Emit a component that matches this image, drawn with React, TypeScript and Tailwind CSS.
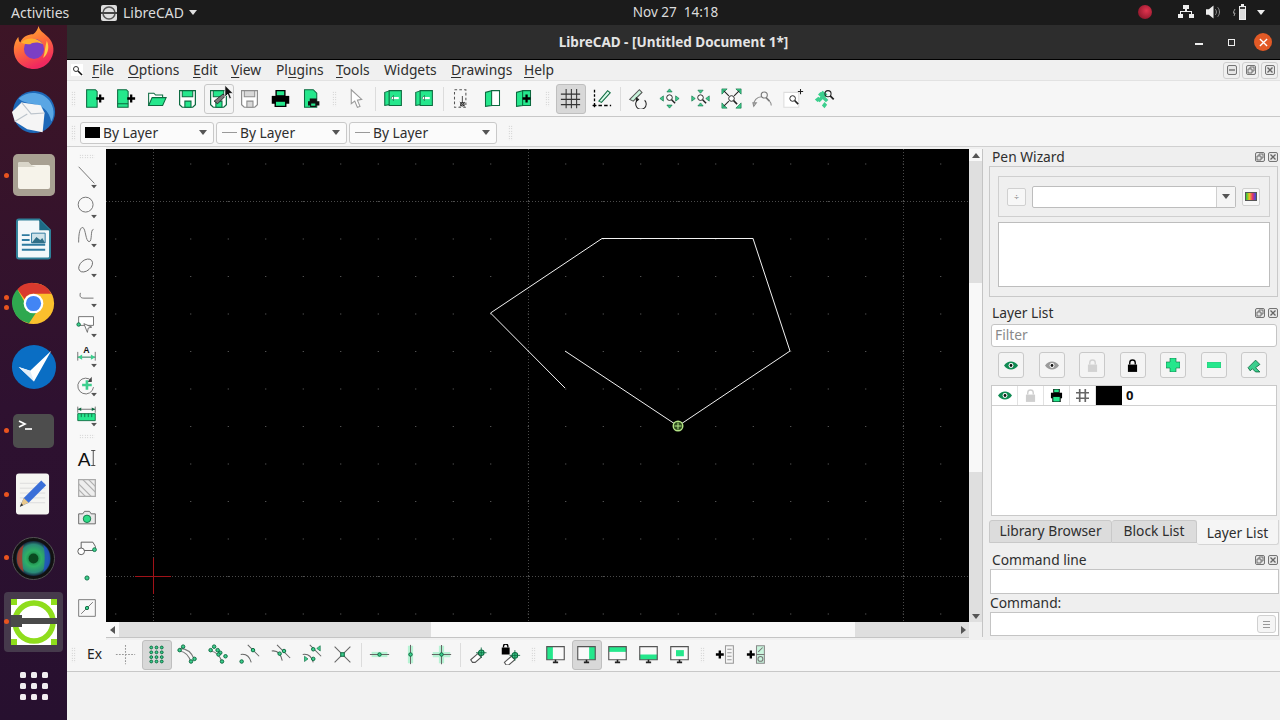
import type { ReactNode } from "react";

const G = "#25e78c";
const D = "#0d6a40";
const K = "#222222";

function Ic({ children, s = 22, w = 1.2 }: { children: ReactNode; s?: number; w?: number }) {
  return (
    <svg viewBox="0 0 24 24" width={s} height={s} fill="none" strokeWidth={w}>
      {children}
    </svg>
  );
}

const N = ({ x, y, r = 2 }: { x: number; y: number; r?: number }) => (
  <circle cx={x} cy={y} r={r} fill="#3ccf8e" stroke={D} strokeWidth="1.1" />
);

const Glass = ({ x = 14, y = 10 }: { x?: number; y?: number }) => (
  <g stroke={K}>
    <circle cx={x} cy={y} r="3.2" fill="#fff" strokeWidth="1.1" />
    <path d={`M${x + 2.4} ${y + 2.4}l4 4`} strokeWidth="1.8" />
  </g>
);

const Doc = ({ plus, strip }: { plus?: boolean; strip?: boolean }) => (
  <>
    <path d="M3 2h10l2 2v18H3z" fill={G} stroke={D} />
    {strip && <path d="M3 18h12" stroke={D} />}
    {plus && <path d="M14 12h9M18.5 7.5v9" stroke="#000" strokeWidth="2.6" />}
  </>
);

const Floppy = ({ c = G, o = D, pen }: { c?: string; o?: string; pen?: boolean }) => (
  <>
    <path d="M3 3h18v16l-3 3H6l-3-3z" fill="#fff" stroke={o} strokeWidth="1.4" />
    <path d="M6 3h12v7H6z" fill={c} stroke={o} />
    <path d="M9 15h7v7H9z" fill={c} stroke={o} />
    {pen && <path d="M7 15l10-8 3 2-9 9z" fill="#7a7a7a" stroke={K} strokeWidth="1" />}
  </>
);

const Monitor = ({ area }: { area: string }) => (
  <>
    <path d="M2 3h20v15H2z" fill="#fafafa" />
    <path d={area} fill={G} />
    <path d="M2 3h20v15H2z" stroke="#555" strokeWidth="1.3" />
    <path d="M9 21h6M12 18v3" stroke={K} strokeWidth="1.8" />
  </>
);

const Book = ({ plus }: { plus?: boolean }) => (
  <>
    <path d="M4 5l7-2v17l-7 1z" fill={G} stroke={D} />
    <path d="M11 3h9v17h-9z" fill={plus ? G : "#fff"} stroke={D} />
    {plus && <path d="M11 12h9M15.5 7.5v9" stroke="#000" strokeWidth="2.6" />}
  </>
);

const Swap = () => (
  <>
    <path d="M2 5l6-2v16l-6 1z" fill={G} stroke={D} />
    <path d="M7 3h14v17H7z" fill={G} stroke={D} />
    <path d="M9 11.5h9" stroke="#fff" strokeWidth="2.5" />
    <path d="M9 11.5l3-3v6z" fill="#fff" stroke={D} strokeWidth="0.8" />
  </>
);

const Tri = ({ d }: { d: string }) => <path d={d} fill="#3ccf8e" stroke={D} strokeWidth="0.7" />;

const top1: ReactNode[] = [
  <Doc plus />,
  <Doc plus strip />,
  <>
    <path d="M3 6h6l2 2h8v3H8l-3 9H3z" fill="#fff" stroke={D} />
    <path d="M7 11h16l-4 9H3z" fill={G} stroke={D} />
  </>,
  <Floppy />,
  <Floppy pen />,
  <Floppy c="#d8d8d8" o="#8d8d8d" />,
  <>
    <path d="M7 3h10v6H7z" fill={G} stroke="#000" strokeWidth="1.6" />
    <path d="M2 9h20v9H2z" fill="#000" />
    <path d="M6 15h12v6H6z" fill={G} stroke="#000" strokeWidth="1.6" />
  </>,
  <>
    <path d="M4 2h10l4 4v16H4z" fill={G} stroke={D} />
    <path d="M10 12h8v3h3v5H8v-5h2z" fill="#111" />
    <path d="M11 17h6v4h-6z" fill={G} stroke="#111" />
  </>,
];

const top2: ReactNode[] = [
  <>
    <path d="M4 2h13v20H4z" stroke="#555" strokeDasharray="3 2.5" />
    <path d="M13 9v7" stroke="#555" />
    <circle cx="13" cy="18.5" r="2" stroke={K} />
    <path d="M10 21l6-5M16 21l-6-5" stroke={K} strokeWidth="0.9" />
  </>,
  <Book />,
  <Book plus />,
];

const zoomPad = (arrows: ReactNode) => (
  <>
    {arrows}
    <Glass x={12} y={11} />
  </>
);

const top3: ReactNode[] = [
  <>
    <path d="M4 2v18" stroke="#000" strokeWidth="1.5" strokeDasharray="3 2" />
    <path d="M2 20h21" stroke="#000" strokeWidth="1.5" strokeDasharray="4 2.5" />
    <path d="M9 15L19 3l3 2.5-10 11z" fill="#d9f9e8" stroke={D} />
    <path d="M2 20h4M4 18v4" stroke="#000" strokeWidth="1.4" />
  </>,
];

const top4: ReactNode[] = [
  <>
    <path d="M2 13L13 2l3 3L6 15z" fill="#c9f5dd" stroke="#555" />
    <path d="M19 14a6 6 0 1 1-7-1" stroke={K} />
    <path d="M9 10l4 3-4 3z" fill={K} />
  </>,
  zoomPad(
    <>
      <Tri d="M12 1l3 3.5H9z" />
      <Tri d="M12 23l3-3.5H9z" />
      <Tri d="M1 12l4-3v6z" />
      <Tri d="M23 12l-4-3v6z" />
    </>
  ),
  zoomPad(
    <>
      <Tri d="M12 6l3-3.5H9z" />
      <Tri d="M12 17l3 3.5H9z" />
      <Tri d="M6 12L2 9v6z" />
      <Tri d="M18 12l4-3v6z" />
    </>
  ),
  <>
    <Tri d="M1 1h6l-6 6z" />
    <Tri d="M23 1h-6l6 6z" />
    <Tri d="M1 23h6l-6-6z" />
    <Tri d="M23 23h-6l6-6z" />
    <path d="M3 3l6 6M21 3l-6 6M3 21l6-6" stroke={K} />
    <Glass x={12} y={12} />
  </>,
  <>
    <path d="M2 20a9 9 0 0 1 9-10" stroke="#8d8d8d" />
    <path d="M2 21l-1-4h4zM22 20c0-2-1-4-2-5" stroke="#8d8d8d" />
    <circle cx="14" cy="8" r="3.5" stroke="#777" />
    <path d="M16 11l4 4" stroke="#777" strokeWidth="1.8" />
  </>,
  <>
    <path d="M1 5h17v17H1z" fill="#fff" stroke="#ddd" />
    <Glass x={11} y={12} />
    <path d="M20 1v6M17 4h6" stroke={K} />
  </>,
  <>
    <path d="M6 6l9 9M14 6l-9 9" stroke="#3ccf8e" strokeWidth="4" />
    <path d="M1 13l4-3 3 3-4 3zM9 20l3-4 3 3-3 4zM7 6l3-3 3 3-3 3z" fill="#3ccf8e" />
    <g stroke={K}>
      <circle cx="16" cy="6.5" r="3.5" strokeWidth="1.2" />
      <path d="M18.5 9l4 4" strokeWidth="2" />
    </g>
  </>,
];

const side1: ReactNode[] = [
  <path d="M3 2l18 19" stroke="#666" />,
  <circle cx="11" cy="11" r="8.5" stroke="#666" />,
  <path d="M3 20C3 8 5 2 8 3s3 16 7 16 1-14 5-14" stroke="#666" />,
  <ellipse cx="11" cy="12" rx="9" ry="6" transform="rotate(-40 11 12)" stroke="#666" />,
  <path d="M20 15H9c-4 0-5-2-4-6" stroke="#666" />,
  <>
    <path d="M3 3h17v10H3z" fill="#fff" stroke="#666" />
    <path d="M9 11l9 4-4 1-1 5z" fill="#fff" stroke="#666" />
    <circle cx="3" cy="12" r="2" fill="#3ccf8e" stroke={D} />
  </>,
  <>
    <text x="12" y="10" textAnchor="middle" fontSize="10" fontWeight="700" fill="#111" fontFamily="Liberation Sans, sans-serif">A</text>
    <path d="M2 9v10M22 9v10" stroke="#666" />
    <path d="M2 15h20" stroke={D} />
    <path d="M2 15l5-3v6zM22 15l-5-3v6z" fill="#3ccf8e" />
  </>,
  <>
    <path d="M18 8a9 9 0 1 0 2 7" stroke="#666" />
    <path d="M18 3v6h-5z" fill="#444" />
    <path d="M11 7h3v4h4v3h-4v4h-3v-4H7v-3h4z" fill="#3ccf8e" />
  </>,
  <>
    <path d="M2 3v7M22 3v7M2 6h20" stroke="#666" />
    <path d="M2 6l4-2v4zM22 6l-4-2v4z" fill={D} />
    <path d="M2 11h20v8H2z" fill={G} stroke={D} />
    <path d="M6 11v4M10 11v4M14 11v4M18 11v4" stroke={D} />
  </>,
];

const side2: ReactNode[] = [
  <>
    <text x="1" y="21" fontSize="23" fill="#111" fontFamily="Liberation Sans, sans-serif">A</text>
    <path d="M17 3h5M17 21h5M19.5 3v18" stroke="#333" />
  </>,
  <>
    <path d="M2 2h20v20H2z" fill="#eee" stroke="#aaa" strokeWidth="1.5" />
    <path d="M2 7l15 15M2 14l8 8M7 2l15 15M14 2l8 8" stroke="#b0b0b0" strokeWidth="1.5" />
  </>,
  <>
    <path d="M2 7h5l2-3h6l2 3h5v12H2z" fill="#e8e8e8" stroke="#555" />
    <circle cx="12" cy="13" r="4.5" fill="#2ddb85" stroke={D} />
  </>,
  <>
    <path d="M5 5h14l3 5v5H5z" stroke="#444" />
    <circle cx="5" cy="16" r="4" fill="#fff" stroke="#444" />
    <circle cx="21" cy="14" r="2.3" fill="#3ccf8e" stroke={D} />
  </>,
  <N x={12} y={12} r={2.5} />,
  <>
    <path d="M2 2h20v20H2z" stroke="#666" />
    <path d="M5 19L19 5" stroke="#666" />
    <N x={12} y={12} />
  </>,
];

const arc = "M3 8c7 1 11 6 13 13";
const arc2 = "M3 5c8 0 14 5 17 13";

const snap1: ReactNode[] = [
  <path d="M1 12h22M12 1v22" stroke="#999" strokeWidth="1.2" strokeDasharray="2 1.5" />,
  <>
    {[4, 9.5, 15, 20].map((y) =>
      [6, 12, 18].map((x) => <N key={`${x}-${y}`} x={x} y={y} r={1.6} />)
    )}
  </>,
  <>
    <path d={arc} stroke="#777" />
    <path d={arc2} stroke="#777" />
    <N x={3} y={7} /><N x={7} y={3} /><N x={16} y={20} /><N x={20} y={17} />
  </>,
  <>
    <path d={arc} stroke="#777" />
    <N x={3} y={7} /><N x={7} y={3} /><N x={11} y={7} /><N x={14} y={10} /><N x={16} y={20} /><N x={20} y={14} /><N x={12} y={12} />
  </>,
  <>
    <path d="M2 12c6-1 10 2 12 9M10 1l13 13" stroke="#666" />
    <N x={3} y={20} /><N x={16} y={7} />
  </>,
  <>
    <path d="M2 8c6-1 10 2 12 11M8 1l15 15" stroke="#666" />
    <N x={11} y={11} /><N x={16} y={8} />
  </>,
  <>
    <path d="M2 12c6-1 10 2 12 9M10 1l13 13" stroke="#666" />
    <N x={14} y={6} /><N x={14} y={17} />
    <Tri d="M22 2v6l-4-3zM4 14v6l4-3z" />
  </>,
  <>
    <path d="M3 3l18 18M21 3L3 21" stroke="#666" />
    <path d="M10 10h4v4h-4z" fill="#3ccf8e" stroke={D} />
  </>,
];

const snap2: ReactNode[] = [
  <>
    <path d="M3 9h18v6H3z" fill="#b7f3d4" />
    <path d="M1 12h22" stroke="#666" />
    <N x={12} y={12} />
  </>,
  <>
    <path d="M9 2h6v20H9z" fill="#b7f3d4" />
    <path d="M12 1v22" stroke="#666" />
    <N x={12} y={12} />
  </>,
  <>
    <path d="M9 2h6v7h7v6h-7v7H9v-7H2V9h7z" fill="#b7f3d4" />
    <path d="M12 1v22M1 12h22" stroke="#666" />
    <N x={12} y={12} />
  </>,
];

const Eraser = () => <path d="M2 18l8-7 4 4-7 6H4z" fill="#fff" stroke="#555" />;
const Target = () => (
  <>
    <circle cx="14" cy="10" r="3.2" fill="#3ccf8e" stroke={D} />
    <path d="M14 4v12M8 10h12" stroke={D} strokeWidth="1" />
  </>
);

const snap3: ReactNode[] = [
  <><Eraser /><Target /></>,
  <>
    <path d="M2 4h9v8H2z" fill="#000" />
    <path d="M4 4V2.5a2.5 2.5 0 0 1 5 0V4" stroke="#000" strokeWidth="1.5" />
    <g transform="translate(3 3)"><Eraser /><Target /></g>
  </>,
];

const views: ReactNode[] = [
  <Monitor area="M2 3h7v15H2z" />,
  <Monitor area="M15 3h7v15h-7z" />,
  <Monitor area="M2 3h20v6H2z" />,
  <Monitor area="M2 12h20v6H2z" />,
  <Monitor area="M8 7h9v7H8z" />,
];

const adds: ReactNode[] = [
  <>
    <path d="M1 12h9M5.5 7.5v9" stroke="#000" strokeWidth="2.7" />
    <path d="M12 2h9v20h-9z" fill="#f7f7f7" stroke="#999" />
    <path d="M14 6h5M14 10h5M14 14h5M14 18h5" stroke="#999" />
  </>,
  <>
    <path d="M1 12h9M5.5 7.5v9" stroke="#000" strokeWidth="2.7" />
    <path d="M12 2h9v20h-9z" fill="#c9f5dd" stroke="#888" />
    <path d="M12 12h9M14 9l5-5" stroke="#777" />
    <circle cx="16.5" cy="17" r="2.8" stroke="#777" />
  </>,
];

function Slots({ items, active, hover }: { items: ReactNode[]; active?: number; hover?: number }) {
  return (
    <>
      {items.map((item, i) => (
        <div key={i} className="w-[31px] h-[31px] flex items-center justify-center">
          <div
            className={`w-[30px] h-[30px] flex items-center justify-center rounded-[3px] border ${
              i === active
                ? "bg-[#d8d8d8] border-[#bfbfbf]"
                : i === hover
                ? "bg-[#f5f5f5] border-[#c8c8c8]"
                : "border-transparent"
            }`}
          >
            <Ic s={21}>{item}</Ic>
          </div>
        </div>
      ))}
    </>
  );
}

const Handle = ({ w }: { w: string }) => (
  <div className={`${w} h-full flex items-center justify-center`}>
    <div className="w-[5px] h-[16px] bg-[radial-gradient(#bdbdbd_0.7px,transparent_0.8px)] bg-[length:2.5px_2.5px]" />
  </div>
);

const Sep = ({ w }: { w: string }) => (
  <div className={`${w} h-full flex items-center justify-center`}>
    <div className="w-px h-[24px] bg-[#dcdcdc]" />
  </div>
);

function Caret({ c = "#555" }: { c?: string }) {
  return (
    <svg width="8" height="5" viewBox="0 0 8 5">
      <path d="M0 0h8L4 5z" fill={c} />
    </svg>
  );
}

function Combo({ w, pl, swatch, dash }: { w: string; pl: string; swatch?: boolean; dash?: boolean }) {
  return (
    <div className={`${w} h-[22px] flex items-center border border-[#c9c9c9] rounded-[3px] bg-[#fbfbfb] ${pl} pr-[6px]`}>
      {swatch && <div className="w-[15px] h-[11px] bg-black mr-[3px]" />}
      {dash && <div className="w-[15px] h-px bg-[#999] mr-[3px]" />}
      <span className="flex-1 text-[13.8px] text-[#2e2e2e] leading-none">By Layer</span>
      <Caret />
    </div>
  );
}

function MiniBtn({ kind, big }: { kind: "min" | "float" | "close"; big?: boolean }) {
  const s = big ? "w-[17px] h-[17px]" : "w-[10px] h-[10px]";
  return (
    <div className={`${s} flex items-center justify-center ${big ? "border border-[#cfcfcf] rounded-[3px]" : ""}`}>
      <svg viewBox="0 0 10 10" width="10" height="10" fill="none" stroke="#666" strokeWidth="0.9">
        <rect x="0.5" y="0.5" width="9" height="9" rx="1.5" fill="#e6e6e6" />
        {kind === "min" && <path d="M2 5h6" strokeWidth="1.3" />}
        {kind === "float" && <path d="M2 4h4v4H2zM4 4V2h4v4H6" />}
        {kind === "close" && <path d="M2.5 2.5l5 5M7.5 2.5l-5 5" strokeWidth="1.3" />}
      </svg>
    </div>
  );
}

function DockTitle({ title, h, pl = "pl-[7px]" }: { title: string; h: string; pl?: string }) {
  return (
    <div className={`${h} flex items-center justify-between ${pl} pr-[2px] text-[13.8px] text-[#2e2e2e]`}>
      <span>{title}</span>
      <div className="flex gap-[3px]">
        <MiniBtn kind="float" />
        <MiniBtn kind="close" />
      </div>
    </div>
  );
}

const Split = ({ h }: { h: string }) => (
  <div className={`${h} flex items-center justify-center`}>
    <div className="w-[16px] h-[2px] bg-[radial-gradient(#b5b5b5_0.6px,transparent_0.7px)] bg-[length:3px_2px]" />
  </div>
);

function Menu({ pre = "", u, rest }: { pre?: string; u: string; rest: string }) {
  return (
    <span>
      {pre}
      <span className="underline underline-offset-2">{u}</span>
      {rest}
    </span>
  );
}

const Eye = ({ c = "#0f8a52" }: { c?: string }) => (
  <svg viewBox="0 0 16 10" width="14" height="9">
    <path d="M0 5c4-6 12-6 16 0-4 6-12 6-16 0z" fill={c} />
    <circle cx="8" cy="5" r="2.8" fill="#fff" />
    <circle cx="8" cy="5" r="1.6" fill="#111" />
  </svg>
);

const Lock = ({ c }: { c: string }) => (
  <svg viewBox="0 0 12 14" width="11" height="13">
    <path d="M1 6h10v8H1z" fill={c} />
    <path d="M3 6V4a3 3 0 0 1 6 0v2" fill="none" stroke={c} strokeWidth="1.5" />
  </svg>
);

const layerBtns: ReactNode[] = [
  <Eye />,
  <Eye c="#9a9a9a" />,
  <Lock c="#d2d2d2" />,
  <Lock c="#000" />,
  <svg viewBox="0 0 14 14" width="14" height="14"><path d="M4 0h6v4h4v6h-4v4H4v-4H0V4h4z" fill={G} stroke={D} strokeWidth="0.6" /></svg>,
  <svg viewBox="0 0 14 6" width="14" height="6"><path d="M0 0h14v6H0z" fill={G} stroke="#2eb877" strokeWidth="0.6" /></svg>,
  <svg viewBox="0 0 14 14" width="15" height="15"><path d="M1 9l7-7 4 4-4 3 4 4H8L5 10 3 12z" fill="#3ccf8e" stroke={D} strokeWidth="0.8" /></svg>,
];

function LayerCell({ children, w = "w-[26px]" }: { children?: ReactNode; w?: string }) {
  return <div className={`${w} h-full flex items-center justify-center border-r border-[#e2e2e2]`}>{children}</div>;
}

function Canvas() {
  const xs = Array.from({ length: 23 }, (_, i) => 9.25 + 37.5 * i);
  const ys = Array.from({ length: 13 }, (_, i) => 14.5 + 37.5 * i);
  const o = (x: number, y: number) => `${x - 106},${y - 149}`;
  return (
    <svg width="863" height="473" className="block bg-black">
      {xs.map((x) =>
        ys.map((y) => <rect key={`${x}-${y}`} x={x} y={y} width="1" height="1" fill="#6a6a6a" />)
      )}
      {[47, 422, 797].map((x) => (
        <path key={x} d={`M${x}.5 0V473`} stroke="#4a4a4a" strokeDasharray="1 2" />
      ))}
      {[52, 427].map((y) => (
        <path key={y} d={`M0 ${y}.5H863`} stroke="#4a4a4a" strokeDasharray="1 2" />
      ))}
      <path d="M29 427.5h36M47.5 409v36" stroke="#a01218" />
      <polyline
        points={[[565, 388], [490.5, 313], [602, 238.5], [753, 238.5], [790, 351], [678, 426], [565, 351]]
          .map(([x, y]) => o(x, y))
          .join(" ")}
        fill="none"
        stroke="#f2f2f2"
      />
      <g transform="translate(572 277)" stroke="#b4e486" fill="none">
        <circle r="4.8" fill="#2c4a1c" strokeWidth="1.4" />
        <path d="M-3.5 0h7M0-3.5v7" strokeWidth="1" />
      </g>
    </svg>
  );
}

function Firefox() {
  return (
    <svg viewBox="0 0 48 48" width="44" height="44">
      <defs>
        <linearGradient id="ff" x1="0" y1="0" x2="0.4" y2="1">
          <stop offset="0" stopColor="#ffc230" />
          <stop offset="0.5" stopColor="#ff7139" />
          <stop offset="1" stopColor="#f0285f" />
        </linearGradient>
      </defs>
      <path d="M29 0c1 5 5 7 9 11 6 5 8 12 7 18-2 11-11 18-21 18C12 47 2 38 2 26 2 19 5 14 7 12c0 3 1 5 2 6 3-7 9-9 14-9 3-2 5-5 6-9z" fill="url(#ff)" />
      <circle cx="24" cy="25" r="11" fill="#7b3fc4" />
      <path d="M10 18c6-6 18-6 24 2-6-3-12-2-14 0-3 0-7 0-10-2z" fill="#ffb02e" />
      <path d="M38 16c3 6 2 14-4 19 2-6 2-13 4-19z" fill="#ffcc44" />
    </svg>
  );
}

function Thunderbird() {
  return (
    <svg viewBox="0 0 48 48" width="46" height="46">
      <circle cx="24" cy="24" r="22" fill="#1d68b8" />
      <path d="M8 10c8-8 24-8 32 2 5 7 6 16 2 22-2-12-10-18-22-19-6-1-9-2-12-5z" fill="#5aa6e4" />
      <path d="M1 24l10-10 20 3 4 8-2 20-16-3L4 34z" fill="#f5f5f5" />
      <path d="M11 14l10 12 14-1M4 34l13-8" stroke="#bcc4cc" strokeWidth="1.2" fill="none" />
    </svg>
  );
}

function Files() {
  return (
    <div className="w-[42px] h-[42px] rounded-[5px] bg-[#a8a092] flex items-center justify-center">
      <svg viewBox="0 0 32 28" width="32" height="28">
        <path d="M0 3a2 2 0 0 1 2-2h8l3 3h17a2 2 0 0 1 2 2v20a2 2 0 0 1-2 2H2a2 2 0 0 1-2-2z" fill="#f6f3ea" />
        <path d="M0 3a2 2 0 0 1 2-2h8l3 3 5 2H0z" fill="#d9d5c9" />
      </svg>
    </div>
  );
}

function Writer() {
  return (
    <svg viewBox="0 0 36 42" width="35" height="42">
      <path d="M1 3a2 2 0 0 1 2-2h21l11 11v27a2 2 0 0 1-2 2H3a2 2 0 0 1-2-2z" fill="#f2f8fa" stroke="#2e8099" strokeWidth="2" />
      <path d="M24 1l11 11H24z" fill="#1d6a85" />
      <path d="M6 16h8v2H6zM6 21h8v2H6zM6 26h24v2H6zM6 31h24v2H6z" fill="#2e7ba0" />
      <path d="M16 15h14v10H16z" fill="#cfe3ea" stroke="#2e7ba0" />
      <path d="M16 25l5-6 4 3 2-2 3 5z" fill="#2f6f87" />
    </svg>
  );
}

function Chrome() {
  return (
    <svg viewBox="0 0 48 48" width="43" height="43">
      <circle cx="24" cy="24" r="23" fill="#fbc02d" />
      <path d="M24 1a23 23 0 0 1 20 12H24a11 11 0 0 0-10 6L6 8A23 23 0 0 1 24 1z" fill="#d93a2e" />
      <path d="M6 8l10 18a11 11 0 0 0 11 8L19 46A23 23 0 0 1 6 8z" fill="#2fa84f" />
      <circle cx="24" cy="24" r="11" fill="#fff" />
      <circle cx="24" cy="24" r="8.5" fill="#4285f4" />
    </svg>
  );
}

function Tasks() {
  return (
    <svg viewBox="0 0 48 48" width="46" height="46">
      <circle cx="24" cy="24" r="23" fill="#0a6ec4" />
      <path d="M8 24l12 4 22-21-18 32z" fill="#fff" />
      <path d="M8 24l12 4 4 11z" fill="#e3eef8" />
    </svg>
  );
}

function Terminal() {
  return (
    <div className="w-[41px] h-[34px] rounded-[5px] bg-[#4d4d4d] relative">
      <svg viewBox="0 0 41 34" width="41" height="34">
        <path d="M6 7l6 3-6 3" stroke="#fff" strokeWidth="1.7" fill="none" />
        <path d="M12 15h7" stroke="#ddd" strokeWidth="2" />
      </svg>
    </div>
  );
}

function TextEd() {
  return (
    <svg viewBox="0 0 36 42" width="35" height="42">
      <rect width="34" height="42" rx="3" fill="#f5f5f2" />
      <path d="M4 10h26M4 15h26M4 20h26M4 25h26M4 30h26" stroke="#dcdcdc" />
      <path d="M4 34l4-9L26 7l5 5-18 18z" fill="#3a6fd8" />
      <path d="M4 34l4-9 5 5z" fill="#e8c88c" />
      <path d="M4 34l1.5-3.5 2 2z" fill="#333" />
    </svg>
  );
}

function Camera() {
  return (
    <svg viewBox="0 0 44 44" width="43" height="43">
      <defs>
        <radialGradient id="lens">
          <stop offset="0" stopColor="#0f6a34" />
          <stop offset="0.45" stopColor="#2fb066" />
          <stop offset="0.8" stopColor="#2a8a78" />
          <stop offset="1" stopColor="#14203a" />
        </radialGradient>
      </defs>
      <circle cx="22" cy="22" r="21.5" fill="#111" stroke="#555" />
      <circle cx="22" cy="22" r="18" fill="url(#lens)" />
      <path d="M5 22a17 17 0 0 1 7-14c-2 8-2 18 0 28a17 17 0 0 1-7-14z" fill="#a83a2a" opacity="0.85" />
      <path d="M39 22a17 17 0 0 0-7-14c2 8 2 18 0 28a17 17 0 0 0 7-14z" fill="#2050c0" opacity="0.85" />
      <circle cx="22" cy="22" r="5" fill="#0a4a20" />
    </svg>
  );
}

function LibreCad() {
  return (
    <svg viewBox="0 0 46 46" width="46" height="46">
      <rect width="46" height="46" fill="#fff" />
      <path d="M0 0h6v6H0zM40 0h6v6h-6zM0 40h6v6H0zM40 40h6v6h-6z" fill="#8fdd1c" />
      <circle cx="23" cy="23" r="19" fill="none" stroke="#8fdd1c" strokeWidth="5.5" />
      <path d="M0 19h11v-3H0zM0 19h46v6H11v3H0z" fill="#4a4a4a" />
    </svg>
  );
}

function AppGrid() {
  return (
    <div className="grid grid-cols-3 gap-x-[5px] gap-y-[5px]">
      {Array.from({ length: 9 }, (_, i) => (
        <div key={i} className="w-[6px] h-[6px] rounded-[1.5px] bg-[#f1eef0]" />
      ))}
    </div>
  );
}

const dock: { el: ReactNode; dots?: number; active?: boolean }[] = [
  { el: <Firefox /> },
  { el: <Thunderbird /> },
  { el: <Files />, dots: 1 },
  { el: <Writer /> },
  { el: <Chrome />, dots: 2 },
  { el: <Tasks /> },
  { el: <Terminal />, dots: 1 },
  { el: <TextEd />, dots: 1 },
  { el: <Camera />, dots: 1 },
  { el: <LibreCad />, dots: 1, active: true },
  { el: <AppGrid /> },
];

export default function App() {
  return (
    <div className="relative w-[1280px] h-[720px] overflow-hidden flex flex-col bg-[#f0f0f0] font-['Noto_Sans',sans-serif] text-[#2e2e2e]">
      {/* gnome top bar */}
      <div className="h-[25px] shrink-0 bg-[#1b1b1b] relative flex items-center text-[14px] text-[#dcdcdc]">
        <span className="ml-[11px] w-[90px]">Activities</span>
        <svg viewBox="0 0 16 16" width="16" height="16" className="mr-[6px]">
          <rect width="16" height="16" rx="2" fill="#ddd" />
          <circle cx="8" cy="8" r="6" fill="none" stroke="#555" strokeWidth="1.5" />
          <path d="M0 7h16v2H0z" fill="#444" />
        </svg>
        <span>LibreCAD</span>
        <span className="ml-[5px]"><Caret c="#e0e0e0" /></span>
        <div className="flex-1 flex justify-center pl-[68px] pr-[194px] text-[13.5px]">
          <span>Nov 27&nbsp;&nbsp;14:18</span>
        </div>
        <div className="absolute left-[1138px] top-[5px] w-[14px] h-[14px] rounded-full bg-[radial-gradient(circle_at_60%_40%,#e0344e,#7a0f22)]" />
        <svg className="absolute left-[1178px] top-[5px]" viewBox="0 0 16 14" width="16" height="14" fill="#eee">
          <path d="M5 0h6v4H9v2h5v3h2v4h-5V9h2V7H3v2h2v4H0V9h2V6h5V4H5z" />
        </svg>
        <svg className="absolute left-[1206px] top-[5px]" viewBox="0 0 16 14" width="15" height="14" fill="none">
          <path d="M0 4h3l5-4v14l-5-4H0z" fill="#eee" />
          <path d="M10 4c1.5 2 1.5 4 0 6M12.5 2c2.5 3 2.5 7 0 10" stroke="#999" />
        </svg>
        <svg className="absolute left-[1233px] top-[4px]" viewBox="0 0 16 16" width="16" height="16" fill="none">
          <path d="M2 5l-2 4h2l-1 3" stroke="#bbb" strokeWidth="0.8" />
          <path d="M6 2h2V0h3v2h2v14H6z" fill="#eee" />
          <path d="M7 3h5v12H7z" fill="#3a3a3a" />
          <path d="M7 5h5v10H7z" fill="#dcdcdc" />
        </svg>
        <span className="absolute left-[1257px] top-[10px]"><Caret c="#eee" /></span>
      </div>

      <div className="flex-1 flex min-h-0">
        {/* ubuntu dock */}
        <div className="w-[67px] shrink-0 overflow-hidden bg-[linear-gradient(180deg,#3d1526_0%,#2e1130_55%,#27102f_100%)]">
          <div className="-mt-[9px] flex flex-col">
            {dock.map((d, i) => (
              <div key={i} className="relative h-[63.8px] shrink-0 flex items-center justify-center">
                {d.active && <div className="absolute left-[4px] right-[4px] top-[2px] bottom-[2px] rounded-[4px] bg-[#463a4c]" />}
                <div className="relative flex items-center justify-center">{d.el}</div>
                {d.dots === 1 && <div className="absolute left-[4px] top-[29px] w-[5px] h-[5px] rounded-full bg-[#e9541f]" />}
                {d.dots === 2 && (
                  <>
                    <div className="absolute left-[4px] top-[24px] w-[5px] h-[5px] rounded-full bg-[#e9541f]" />
                    <div className="absolute left-[4px] top-[34px] w-[5px] h-[5px] rounded-full bg-[#e9541f]" />
                  </>
                )}
              </div>
            ))}
          </div>
        </div>

        <div className="flex-1 flex flex-col min-w-0">
          {/* window title */}
          <div className="h-[35px] shrink-0 bg-[#2d2d2d] border-b border-black flex items-center relative pt-px">
            <div className="w-full text-center text-[13.5px] font-bold text-[#e4e4e4]">LibreCAD - [Untitled Document 1*]</div>
            <div className="absolute left-[1128px] top-[18px] w-[8px] h-[1.5px] bg-[#eee]" />
            <div className="absolute left-[1161px] top-[14px] w-[7px] h-[7px] border-[1.5px] border-[#eee]" />
            <div className="absolute left-[1187px] top-[8px] w-[18px] h-[18px] rounded-full bg-[#e25a26] flex items-center justify-center">
              <svg viewBox="0 0 10 10" width="9" height="9"><path d="M1 1l8 8M9 1l-8 8" stroke="#fff" strokeWidth="1.5" /></svg>
            </div>
          </div>

          {/* menu */}
          <div className="h-[21px] shrink-0 bg-[#f0f0f0] border-b border-[#e2e2e2] flex items-center text-[13.8px] relative">
            <svg className="ml-[3px] mr-[8px]" viewBox="0 0 14 14" width="14" height="14" fill="none">
              <path d="M1 1h12v12H1z" fill="#fff" />
              <circle cx="6" cy="6" r="2.5" stroke="#333" />
              <path d="M8 8l4 4" stroke="#111" strokeWidth="1.6" />
            </svg>
            <div className="w-[36px]"><Menu u="F" rest="ile" /></div>
            <div className="w-[65px]"><Menu u="O" rest="ptions" /></div>
            <div className="w-[38px]"><Menu u="E" rest="dit" /></div>
            <div className="w-[45px]"><Menu u="V" rest="iew" /></div>
            <div className="w-[60px]"><Menu pre="Pl" u="u" rest="gins" /></div>
            <div className="w-[48px]"><Menu u="T" rest="ools" /></div>
            <div className="w-[67px]">Widgets</div>
            <div className="w-[73px]"><Menu u="D" rest="rawings" /></div>
            <div><Menu u="H" rest="elp" /></div>
            <div className="ml-auto mr-[2px] flex gap-[2px]">
              <MiniBtn kind="min" big />
              <MiniBtn kind="float" big />
              <MiniBtn kind="close" big />
            </div>
          </div>

          {/* main toolbar */}
          <div className="h-[36px] shrink-0 bg-[#f6f6f6] border-b border-[#c8c8c8] flex items-center">
            <Handle w="w-[12px]" />
            <Slots items={top1} hover={4} />
            <Handle w="w-[14px]" />
            <Slots items={[<path d="M6 2l12 11-5 1 3 7-3 1-3-7-4 3z" fill="#fff" stroke="#9a9a9a" />]} />
            <Sep w="w-[6px]" />
            <Slots items={[<Swap />, <Swap />]} />
            <Sep w="w-[6px]" />
            <Slots items={top2} />
            <Handle w="w-[16px]" />
            <Slots
              items={[
                <path d="M7 1v22M13 1v22M19 1v22M1 7h22M1 13h22M1 19h22" stroke="#333" />,
                ...top3,
              ]}
              active={0}
            />
            <Sep w="w-[6px]" />
            <Slots items={top4} />
          </div>

          {/* pen toolbar */}
          <div className="h-[30px] shrink-0 bg-[#f6f6f6] border-b border-[#d0d0d0] flex items-center pt-[2px]">
            <Handle w="w-[12px]" />
            <div className="ml-px flex gap-[2px]">
              <Combo w="w-[134px]" pl="pl-[4px]" swatch />
              <Combo w="w-[131px]" pl="pl-[5px]" dash />
              <Combo w="w-[148px]" pl="pl-[5px]" dash />
            </div>
            <Handle w="w-[26px]" />
          </div>

          <div className="h-[493px] shrink-0 flex">
            {/* left tools */}
            <div className="w-[39px] shrink-0 bg-[#f8f8f8] flex flex-col items-center">
              <div className="h-[14px] w-full flex items-end justify-center">
                <div className="w-[16px] h-[5px] mb-[2px] bg-[radial-gradient(#bdbdbd_0.7px,transparent_0.8px)] bg-[length:2.5px_2.5px]" />
              </div>
              {side1.map((icon, i) => (
                <div key={i} className="relative h-[29.8px] w-full flex items-center justify-center">
                  <Ic s={21} w={1}>{icon}</Ic>
                  <span className="absolute right-[8px] bottom-[2px] scale-75"><Caret /></span>
                </div>
              ))}
              <div className="h-[14px] w-full flex items-center justify-center">
                <div className="w-[16px] h-[5px] bg-[radial-gradient(#bdbdbd_0.7px,transparent_0.8px)] bg-[length:2.5px_2.5px]" />
              </div>
              {side2.map((icon, i) => (
                <div key={i} className="h-[30px] w-full flex items-center justify-center">
                  <Ic s={20} w={1}>{icon}</Ic>
                </div>
              ))}
            </div>

            {/* drawing area + scrollbars */}
            <div className="w-[877px] shrink-0 flex flex-col pt-[2px]">
              <div className="flex">
                <Canvas />
                <div className="w-[14px] h-[473px] border-r border-[#c4c4c4] flex flex-col bg-[#dfdfdf]">
                  <div className="h-[12px] bg-[#f8f8f8] flex items-center justify-center"><svg width="8" height="5" viewBox="0 0 8 5"><path d="M0 5h8L4 0z" fill="#555" /></svg></div>
                  <div className="h-[122px]" />
                  <div className="h-[189px] bg-[#f8f8f8]" />
                  <div className="flex-1" />
                  <div className="h-[12px] flex items-center justify-center"><Caret /></div>
                </div>
              </div>
              <div className="h-[16px] w-[877px] flex">
                <div className="w-[863px] h-[16px] bg-[#dfdfdf] border-b border-[#c4c4c4] flex items-center">
                  <div className="w-[13px] h-full bg-[#f8f8f8] flex items-center justify-center"><svg width="5" height="8" viewBox="0 0 5 8"><path d="M5 0v8L0 4z" fill="#555" /></svg></div>
                  <div className="w-[312px]" />
                  <div className="w-[424px] h-full bg-[#f8f8f8]" />
                  <div className="flex-1" />
                  <div className="w-[12px] flex items-center justify-center"><svg width="5" height="8" viewBox="0 0 5 8"><path d="M0 0v8l5-4z" fill="#555" /></svg></div>
                </div>
                <div className="flex-1 h-[15px] border-r border-[#c4c4c4]" />
              </div>
            </div>

            {/* right docks */}
            <div className="flex-1 flex flex-col min-w-0 bg-[#efefef]">
              <DockTitle title="Pen Wizard" h="h-[18px] mt-px" pl="pl-[9px]" />
              <div className="h-[131px] ml-[6px] mr-[2px] border border-[#c9c9c9] pl-[8px] pr-[7px] pt-[9px]">
                <div className="h-[41px] border border-[#cfcfcf] flex items-center pl-[8px] pr-[9px]">
                  <div className="w-[19px] h-[18px] border border-[#d0d0d0] rounded-[2px] bg-[#f7f7f7] flex items-center justify-center text-[9px] leading-none text-[#777]">÷</div>
                  <div className="ml-[6px] w-[205px] h-[22px] bg-white border border-[#bdbdbd] rounded-[2px] flex">
                    <div className="flex-1" />
                    <div className="w-[19px] border-l border-[#cfcfcf] bg-[#f5f5f5] flex items-center justify-center"><Caret /></div>
                  </div>
                  <div className="ml-[6px] w-[18px] h-[18px] border border-[#d0d0d0] rounded-[2px] bg-[#f7f7f7] flex items-center justify-center">
                    <div className="w-[12px] h-[9px] border border-[#555] bg-[linear-gradient(90deg,#27c93f,#f0c020,#e03070,#3050e0)]" />
                  </div>
                </div>
                <div className="mt-[5px] h-[65px] bg-white border border-[#bdbdbd]" />
              </div>
              <Split h="h-[7px]" />
              <DockTitle title="Layer List" h="h-[18px]" pl="pl-[9px]" />
              <div className="ml-[8px] mr-[3px] h-[23px] mt-[2px] bg-white border border-[#c4c4c4] rounded-[3px] flex items-center pl-[3px] text-[13.8px] text-[#8a8a8a]">Filter</div>
              <div className="ml-[15px] mt-[5px] flex gap-[14.5px]">
                {layerBtns.map((b, i) => (
                  <div key={i} className="w-[26px] h-[26px] border border-[#c9c9c9] rounded-[3px] bg-[#f4f4f4] flex items-center justify-center">{b}</div>
                ))}
              </div>
              <div className="ml-[8px] mr-[3px] mt-[7px] h-[131px] bg-white border border-[#c9c9c9]">
                <div className="h-[20px] flex items-center border-b border-[#d0d0d0]">
                  <LayerCell><Eye /></LayerCell>
                  <LayerCell><Lock c="#cfcfcf" /></LayerCell>
                  <LayerCell>
                    <svg viewBox="0 0 14 14" width="13" height="13">
                      <path d="M4 0h6v4H4z" fill={G} stroke="#000" />
                      <path d="M1 4h12v6H1z" fill="#000" />
                      <path d="M3 8h8v6H3z" fill={G} stroke="#000" />
                    </svg>
                  </LayerCell>
                  <LayerCell>
                    <svg viewBox="0 0 14 14" width="13" height="13"><path d="M4 0v14M10 0v14M0 4h14M0 10h14" stroke="#666" strokeWidth="1.8" /></svg>
                  </LayerCell>
                  <div className="w-[26px] h-full bg-black" />
                  <span className="ml-[4px] text-[13px] font-bold text-[#111]">0</span>
                </div>
              </div>
              <div className="ml-[6px] mt-[4px] h-[25px] flex text-[13.8px]">
                <div className="w-[123px] h-[23px] bg-[#dcdcdc] border border-[#c9c9c9] rounded-t-[3px] flex items-center justify-center">Library Browser</div>
                <div className="w-[85px] h-[23px] bg-[#dcdcdc] border border-l-0 border-[#c9c9c9] rounded-t-[3px] flex items-center justify-center">Block List</div>
                <div className="w-[82px] h-[25px] bg-[#f5f5f5] border-b border-r border-[#d5d5d5] rounded-b-[3px] flex items-center justify-center pt-[2px]">Layer List</div>
              </div>
              <Split h="h-[6px]" />
              <DockTitle title="Command line" h="h-[18px]" pl="pl-[9px]" />
              <div className="ml-[7px] mr-px h-[25px] bg-white border border-[#c4c4c4]" />
              <div className="ml-[7px] h-[18px] flex items-center text-[13.8px]">Command:</div>
              <div className="ml-[7px] mr-px h-[24px] bg-white border border-[#c4c4c4] flex items-center justify-end pr-[2px]">
                <div className="w-[19px] h-[18px] border border-[#d0d0d0] rounded-[3px] bg-[#f5f5f5] flex flex-col items-center justify-center gap-[2px]">
                  <div className="w-[7px] h-px bg-[#999]" />
                  <div className="w-[7px] h-px bg-[#999]" />
                  <div className="w-[7px] h-px bg-[#999]" />
                </div>
              </div>
            </div>
          </div>

          {/* snap toolbar */}
          <div className="h-[32px] shrink-0 bg-[#f6f6f6] border-b border-[#c8c8c8] flex items-center pb-[2px]">
            <Handle w="w-[12px]" />
            <div className="w-[31px] text-center text-[13.8px] text-[#222]">Ex</div>
            <Slots items={snap1} active={1} />
            <Sep w="w-[6px]" />
            <Slots items={snap2} />
            <Sep w="w-[7px]" />
            <Slots items={snap3} />
            <Handle w="w-[14px]" />
            <Slots items={views} active={1} />
            <Handle w="w-[15px]" />
            <Slots items={adds} />
          </div>

          <div className="flex-1 bg-[#f2f2f2]" />
        </div>
      </div>

      {/* mouse pointer */}
      <svg className="absolute left-[224px] top-[84px]" viewBox="0 0 12 18" width="11" height="17">
        <path d="M1 1v13l3-3 2 5 2-1-2-5h4z" fill="#111" stroke="#fff" strokeWidth="0.8" />
      </svg>
    </div>
  );
}
